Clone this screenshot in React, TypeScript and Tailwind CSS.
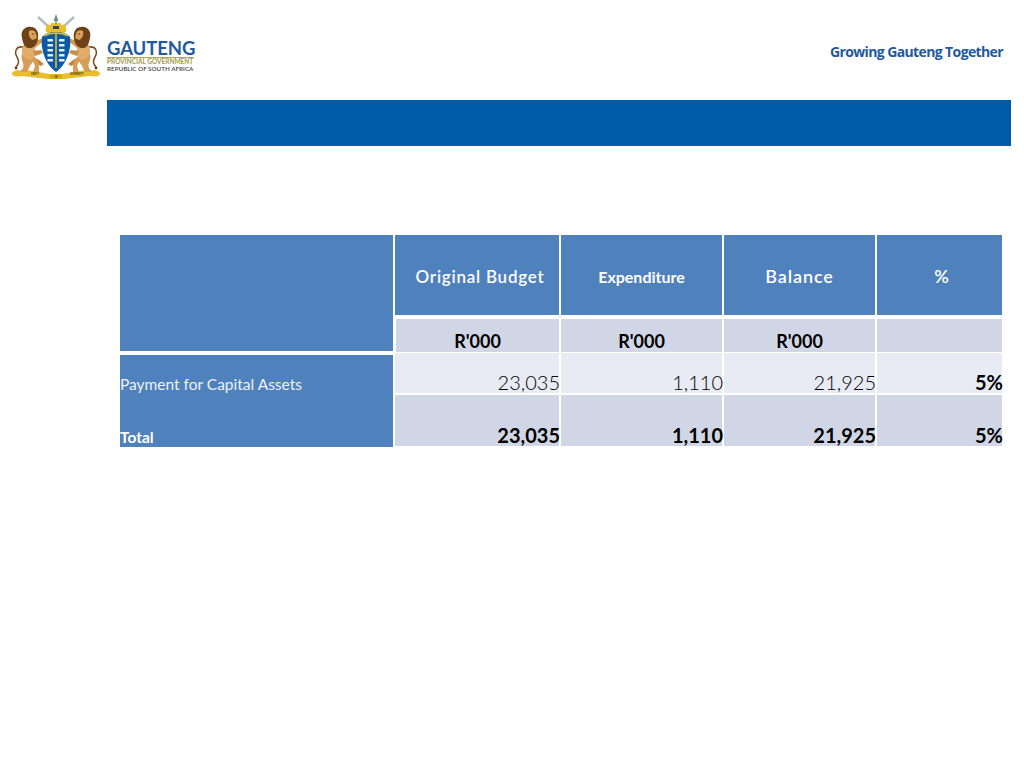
const Lion = ({ flip }: { flip?: boolean }) => (
  <g transform={flip ? "translate(96 0) scale(-1 1)" : undefined}>
    {/* tail */}
    <path d="M15 37 C8 36 6 42 9 47 C11 50 11 54 8 57" fill="none" stroke="#7b4a1e" strokeWidth="1.5" />
    <circle cx="8" cy="58" r="1.4" fill="#6e4219" />
    {/* hind leg */}
    <path d="M14 44 C12 50 17 53 15 58 L12 62 L19 62 L22 56 C24 53 26 50 27 47 Z" fill="#d79c55" />
    {/* far leg */}
    <path d="M23 46 L31 50 L36 54 L33 56 L25 52 Z" fill="#c4873f" />
    <path d="M24 49 L27 56 L25 62 L31 62 L31 55 L28 48 Z" fill="#d79c55" />
    {/* torso */}
    <path d="M15 36 C12 42 15 48 21 50 C26 50 28 45 27 40 L27 33 L19 30 Z" fill="#e0ad6b" />
    {/* raised front leg */}
    <path d="M23 33 L35 28 L36 31 L27 38 Z" fill="#d79c55" />
    <path d="M25 41 L33 40 L35 43 L27 46 Z" fill="#c98f4b" />
    {/* mane */}
    <path d="M14 28 C12 20 18 16 23 17 C29 17 31 23 30 29 C29 35 25 39 20 38 C16 37 15 33 14 28 Z" fill="#6e4219" />
    {/* face */}
    <path d="M21 21 C24 19 28 21 28 24 L29 28 L25 30 C22 29 20 25 21 21 Z" fill="#d9a15a" />
    <circle cx="25" cy="24" r="0.7" fill="#3a2410" />
  </g>
);

const Crest = () => (
  <svg viewBox="0 0 96 72" width="96" height="72" className="shrink-0" aria-hidden="true">
    {/* crossed blades */}
    <path d="M30 7 L41 17" stroke="#b9bdc1" strokeWidth="2.6" />
    <path d="M66 7 L55 17" stroke="#b9bdc1" strokeWidth="2.6" />
    {/* spear */}
    <path d="M48 4 L50.5 11 L48.8 11 L48.8 17 L47.2 17 L47.2 11 L45.5 11 Z" fill="#6f8f8c" />
    {/* crown */}
    <path d="M38 22 C37 15 40 13 42 16 C43 12 46 12 48 15 C50 12 53 12 54 16 C56 13 59 15 58 22 C53 24 43 24 38 22 Z" fill="#e9bd2c" />
    <rect x="45" y="16" width="6" height="3" fill="#37465a" />
    {/* motto ribbon */}
    <path d="M4 63 C9 58 13 62 18 60 L42 64 L54 64 L78 60 C83 62 87 58 92 63 C92 67 87 67 82 66 L56 69 L40 69 L14 66 C9 67 4 67 4 63 Z" fill="#e9bd2c" />
    <rect x="42" y="64.5" width="12" height="4.5" fill="#d6aa22" />
    <text x="27" y="65" textAnchor="middle" fontFamily="Liberation Sans, sans-serif" fontSize="2.6" fontWeight="700" fill="#4a3a10">UNITY</text>
    <text x="48" y="68" textAnchor="middle" fontFamily="Liberation Sans, sans-serif" fontSize="2.6" fontWeight="700" fill="#4a3a10">IN</text>
    <text x="69" y="65" textAnchor="middle" fontFamily="Liberation Sans, sans-serif" fontSize="2.6" fontWeight="700" fill="#4a3a10">DIVERSITY</text>
    {/* lions */}
    <Lion />
    <Lion flip />
    {/* shield */}
    <path d="M48 22 C54 22 60 24 62 27 C64 41 57 56 48 62 C39 56 32 41 34 27 C36 24 42 22 48 22 Z" fill="#0b5aa6" />
    <path d="M36 26 C43 22 53 22 60 26" fill="none" stroke="#e9bd2c" strokeWidth="1.3" />
    {/* rod and shield bars */}
    <path d="M48 23 L48 58" stroke="#e3b92e" strokeWidth="1.6" />
    {[29, 34, 39, 44, 49].map((y) => (
      <g key={y} fill="#e6eef6">
        <rect x="39.5" y={y} width="5.5" height="2.4" rx="0.5" />
        <rect x="51" y={y} width="5.5" height="2.4" rx="0.5" />
      </g>
    ))}
  </svg>
);

const cellBase = "flex h-full font-['Lato',sans-serif]";
const shade = "bg-[#d0d6e6]";
const light = "bg-[#e8ebf3]";
const blue = "bg-[#4f81bd]";

const Num = ({ v, bold, bg }: { v: string; bold?: boolean; bg: string }) => (
  <div
    className={`${cellBase} ${bg} items-end justify-end pb-[1px] text-[20px] leading-none text-black ${
      bold ? "font-bold" : "font-light"
    }`}
  >
    <span className="-mr-[1px]">{v}</span>
  </div>
);

const Head = ({ children, kind }: { children: string; kind?: "small" | "wide" | "pct" }) => (
  <div
    className={`${cellBase} ${blue} items-center justify-center pt-[3px] text-white ${
      kind === "small"
        ? "text-[16px] font-bold"
        : kind === "wide"
          ? "text-[18px] font-semibold tracking-[0.9px]"
          : kind === "pct"
            ? "pl-[4px] text-[18px] font-semibold"
            : "pl-[6px] text-[17px] font-semibold tracking-[0.75px]"
    }`}
  >
    {children}
  </div>
);

export default function App() {
  return (
    <div className="h-[768px] w-[1024px] overflow-hidden bg-white">
      <header className="flex h-[100px] items-start justify-between pl-[8px] pr-[21px]">
        <div className="flex items-start pt-[10px]">
          <Crest />
          <div className="ml-[3px] mt-[29px] flex w-[90px] flex-col font-['Lato',sans-serif]">
            <span className="text-[18.5px] font-bold leading-[18px] tracking-[-0.1px] text-[#1f5a9c]">GAUTENG</span>
            <span className="w-[87px] border-t border-[#b3a95a] text-[6.5px] font-bold leading-[7px] text-[#a49a4e]">
              PROVINCIAL GOVERNMENT
            </span>
            <span className="text-[6.3px] font-semibold leading-[8px] text-[#444444]">REPUBLIC OF SOUTH AFRICA</span>
          </div>
        </div>
        <span className="mt-[43px] font-['Open_Sans',sans-serif] text-[14px] font-bold leading-[18px] tracking-[-0.62px] text-[#1f5a9c]">
          Growing Gauteng Together
        </span>
      </header>

      <div className="ml-[107px] h-[46px] w-[904px] bg-[#005cab]" />

      <div className="ml-[120px] mt-[89px] grid w-[882px] grid-cols-[273px_164px_161px_151px_125px] grid-rows-[80px_37px_42px_52px] gap-x-[2px]">
        <div className={`${blue} row-span-2 h-[116px]`} />
        <Head>Original Budget</Head>
        <Head kind="small">Expenditure</Head>
        <Head kind="wide">Balance</Head>
        <Head kind="pct">%</Head>

        <div className={`${shade} ml-[1px] mt-[4px] flex h-[33px] items-end justify-center font-['Lato',sans-serif] text-[18px] font-bold leading-[22px] text-black`}>
          R'000
        </div>
        <div className={`${shade} mt-[4px] flex h-[33px] items-end justify-center font-['Lato',sans-serif] text-[18px] font-bold leading-[22px] text-black`}>
          R'000
        </div>
        <div className={`${shade} mt-[4px] flex h-[33px] items-end justify-center font-['Lato',sans-serif] text-[18px] font-bold leading-[22px] text-black`}>
          R'000
        </div>
        <div className={`${shade} mt-[4px] h-[33px]`} />

        <div className={`${blue} ${cellBase} mt-[3px] h-[38px] items-end pb-[3px] text-[15.5px] leading-[20px] text-[#eef2f8]`}>
          Payment for Capital Assets
        </div>
        <div className="mt-[1px] h-[40px]"><Num v="23,035" bg={light} /></div>
        <div className="mt-[1px] h-[40px]"><Num v="1,110" bg={light} /></div>
        <div className="mt-[1px] h-[40px]"><Num v="21,925" bg={light} /></div>
        <div className="mt-[1px] h-[40px]"><Num v="5%" bold bg={light} /></div>

        <div className={`${blue} ${cellBase} mt-[1px] h-[51px] items-end text-[15.5px] font-bold leading-[20px] text-white`}>
          Total
        </div>
        <div className="mt-[1px] h-[51px]"><Num v="23,035" bold bg={shade} /></div>
        <div className="mt-[1px] h-[51px]"><Num v="1,110" bold bg={shade} /></div>
        <div className="mt-[1px] h-[51px]"><Num v="21,925" bold bg={shade} /></div>
        <div className="mt-[1px] h-[51px]"><Num v="5%" bold bg={shade} /></div>
      </div>
    </div>
  );
}
